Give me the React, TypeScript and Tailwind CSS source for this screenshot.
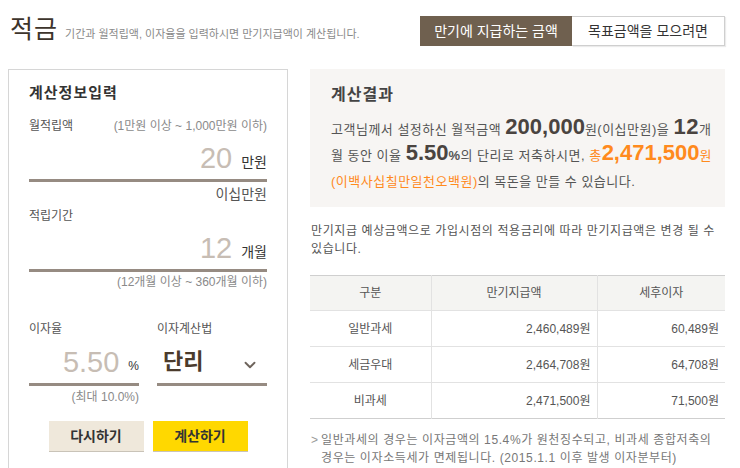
import { ChevronDown } from 'lucide-react';

const font = { fontFamily: '"Liberation Sans", "Noto Sans CJK KR", sans-serif' };

const rows = [
  { label: '일반과세', total: '2,460,489원', interest: '60,489원' },
  { label: '세금우대', total: '2,464,708원', interest: '64,708원' },
  { label: '비과세', total: '2,471,500원', interest: '71,500원' },
];

export default function App() {
  return (
    <div
      className="w-[740px] h-[468px] overflow-hidden bg-white pl-[8px] text-[#555]"
      style={font}
    >
      {/* header */}
      <div className="flex items-start h-[69px] pt-[16px] w-[717px]">
        <div className="flex items-end pl-[2px]">
          <h1 className="text-[25px] leading-[26px] font-normal text-[#3d342c] tracking-[1px]">적금</h1>
          <span className="ml-[7px] text-[11px] leading-[14px] text-[#8a8a8a] mb-[1px]">
            기간과 월적립액, 이자율을 입력하시면 만기지급액이 계산됩니다.
          </span>
        </div>
        <div className="ml-auto flex h-[30px]">
          <div className="w-[152px] bg-[#6f604f] text-white text-[14px] flex items-center justify-center">
            만기에 지급하는 금액
          </div>
          <div className="w-[153px] bg-white border border-[#cfcfcf] border-l-0 shadow-[1px_1px_1px_rgba(0,0,0,0.08)] text-[#333] text-[14px] flex items-center justify-center">
            목표금액을 모으려면
          </div>
        </div>
      </div>

      <div className="flex gap-[22px]">
        {/* input panel */}
        <div className="w-[280px] h-[420px] border border-[#d6d6d6] px-[20px] pt-[13px]">
          <h2 className="text-[15px] font-bold text-[#333] leading-[20px] tracking-[1px]">계산정보입력</h2>

          <div className="mt-[15px] flex justify-between text-[12px] leading-[16px]">
            <span className="text-[#555]">월적립액</span>
            <span className="text-[#8a8a8a]">(1만원 이상 ~ 1,000만원 이하)</span>
          </div>
          <div className="mt-[9px] flex items-end justify-end gap-[9px] pb-[6px] border-b-[3px] border-[#968b82]">
            <span className="text-[29px] leading-[30px] text-[#c7bdb4]">20</span>
            <span className="text-[14px] leading-[18px] text-[#333] mb-[2px]">만원</span>
          </div>
          <div className="text-right text-[14px] leading-[18px] text-[#555] mt-[3px]">이십만원</div>

          <div className="mt-[5px] text-[12px] leading-[16px]">적립기간</div>
          <div className="mt-[9px] flex items-end justify-end gap-[9px] pb-[6px] border-b-[3px] border-[#968b82]">
            <span className="text-[29px] leading-[30px] text-[#c7bdb4]">12</span>
            <span className="text-[14px] leading-[18px] text-[#333] mb-[2px]">개월</span>
          </div>
          <div className="text-right text-[12px] leading-[16px] text-[#8a8a8a] mt-[2px]">
            (12개월 이상 ~ 360개월 이하)
          </div>

          <div className="mt-[31px] flex gap-[18px]">
            <div className="w-[110px]">
              <div className="text-[12px] leading-[16px]">이자율</div>
              <div className="mt-[10px] flex items-end justify-end gap-[9px] pb-[6px] border-b-[3px] border-[#968b82]">
                <span className="text-[29px] leading-[30px] text-[#c7bdb4]">5.50</span>
                <span className="text-[12px] leading-[16px] text-[#333] mb-[3px]">%</span>
              </div>
              <div className="text-right text-[12px] leading-[16px] text-[#8a8a8a] mt-[3px]">(최대 10.0%)</div>
            </div>
            <div className="w-[110px]">
              <div className="text-[12px] leading-[16px]">이자계산법</div>
              <div className="mt-[10px] flex items-center justify-between pl-[6px] pr-[8px] pb-[6px] h-[39px] border-b-[3px] border-[#968b82]">
                <span className="text-[22px] font-bold text-[#4b3b2c] leading-[30px]">단리</span>
                <ChevronDown className="w-[18px] h-[18px] text-[#6e645c] mt-[6px]" strokeWidth={2.5} />
              </div>
            </div>
          </div>

          <div className="mt-[16px] flex justify-center gap-[9px]">
            <button className="w-[95px] h-[31px] bg-[#efe8db] border-b border-[#c9c3b8] text-[14px] font-bold text-[#333]">
              다시하기
            </button>
            <button className="w-[95px] h-[31px] bg-[#ffd800] border-b border-[#c9c3b8] text-[14px] font-bold text-[#333]">
              계산하기
            </button>
          </div>
        </div>

        {/* result panel */}
        <div className="w-[415px]">
          <div className="bg-[#f7f5f3] h-[138px] pl-[21px] pr-[10px] pt-[16px]">
            <h2 className="text-[16px] font-bold text-[#444] leading-[20px] tracking-[1px]">계산결과</h2>
            <p className="mt-[12px] text-[13px] leading-[26px] text-[#555] tracking-[0.5px]">
              고객님께서 설정하신 월적금액{' '}
              <span className="text-[22px] leading-[20px] font-bold text-[#4a4440] tracking-[0px]">200,000</span>원(이십만원)을{' '}
              <span className="text-[22px] leading-[20px] font-bold text-[#4a4440]">12</span>개월 동안 이율{' '}
              <span className="text-[22px] leading-[20px] font-bold text-[#4a4440] tracking-[0px]">5.50</span>
              <span className="font-bold">%</span>의 단리로 저축하시면,{' '}
              <span className="text-[#ff8a1d]">
                총<span className="text-[22px] leading-[20px] font-bold tracking-[0px]">2,471,500</span>원 (이백사십칠만일천오백원)
              </span>
              의 목돈을 만들 수 있습니다.
            </p>
          </div>

          <p className="mt-[15px] text-[12px] leading-[18px] text-[#555] pl-[1px] tracking-[0.6px]">
            만기지급 예상금액으로 가입시점의 적용금리에 따라 만기지급액은 변경 될 수
            <br />
            있습니다.
          </p>

          <table className="mt-[17px] w-full border-collapse text-[12px] text-[#555]">
            <thead>
              <tr className="bg-[#f4f4f2] border-t border-[#cfcfcf]">
                <th className="w-[121px] h-[35px] font-normal border-r border-[#e2e2e2]">구분</th>
                <th className="w-[166px] font-normal border-r border-[#e2e2e2]">만기지급액</th>
                <th className="font-normal">세후이자</th>
              </tr>
            </thead>
            <tbody>
              {rows.map((r, i) => (
                <tr
                  key={r.label}
                  className={i === rows.length - 1 ? 'border-t border-b border-[#e2e2e2] border-b-[#cfcfcf]' : 'border-t border-[#e2e2e2]'}
                >
                  <td className="h-[36px] text-center border-r border-[#e2e2e2]">{r.label}</td>
                  <td className="text-right pr-[6px] border-r border-[#e2e2e2]">{r.total}</td>
                  <td className="text-right pr-[6px]">{r.interest}</td>
                </tr>
              ))}
            </tbody>
          </table>

          <div className="mt-[12px] flex text-[12px] leading-[18px] text-[#777] tracking-[0.6px]">
            <span className="w-[11px] shrink-0 pl-[1px] text-[#999]">&gt;</span>
            <span>
              일반과세의 경우는 이자금액의 15.4%가 원천징수되고, 비과세 종합저축의
              <br />
              경우는 이자소득세가 면제됩니다. (2015.1.1 이후 발생 이자분부터)
            </span>
          </div>
        </div>
      </div>
    </div>
  );
}
